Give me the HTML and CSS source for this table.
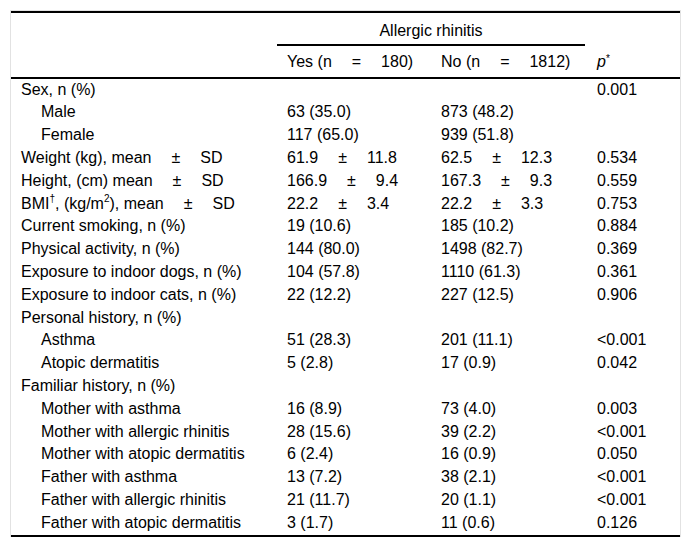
FILE: index.html
```html
<!DOCTYPE html>
<html>
<head>
<meta charset="utf-8">
<link rel="stylesheet" href="styles.css">
</head>
<body>
<div class="frame">
<table class="tbl">
<colgroup>
<col class="col-lbl">
<col class="col-yes">
<col class="col-no">
<col class="col-p">
</colgroup>
<thead>
<tr class="h1">
<th></th>
<th class="grp" colspan="2"><span class="grp-line">Allergic rhinitis</span></th>
<th></th>
</tr>
<tr class="h2">
<th></th>
<th>Yes (n&#8195;&#8197;=&#8195;&#8197;180)</th>
<th>No (n&#8195;&#8197;=&#8195;&#8197;1812)</th>
<th><i>p</i><sup class="ast">*</sup></th>
</tr>
</thead>
<tbody>
<tr><td>Sex, n (%)</td><td></td><td></td><td>0.001</td></tr>
<tr><td class="ind">Male</td><td>63 (35.0)</td><td>873 (48.2)</td><td></td></tr>
<tr><td class="ind">Female</td><td>117 (65.0)</td><td>939 (51.8)</td><td></td></tr>
<tr><td>Weight (kg), mean&#8195;&#8197;±&#8195;&#8197;SD</td><td>61.9&#8195;&#8197;±&#8195;&#8197;11.8</td><td>62.5&#8195;&#8197;±&#8195;&#8197;12.3</td><td>0.534</td></tr>
<tr><td>Height, (cm) mean&#8195;&#8197;±&#8195;&#8197;SD</td><td>166.9&#8195;&#8197;±&#8195;&#8197;9.4</td><td>167.3&#8195;&#8197;±&#8195;&#8197;9.3</td><td>0.559</td></tr>
<tr><td>BMI<sup>†</sup>, (kg/m<sup>2</sup>), mean&#8195;&#8197;±&#8195;&#8197;SD</td><td>22.2&#8195;&#8197;±&#8195;&#8197;3.4</td><td>22.2&#8195;&#8197;±&#8195;&#8197;3.3</td><td>0.753</td></tr>
<tr><td>Current smoking, n (%)</td><td>19 (10.6)</td><td>185 (10.2)</td><td>0.884</td></tr>
<tr><td>Physical activity, n (%)</td><td>144 (80.0)</td><td>1498 (82.7)</td><td>0.369</td></tr>
<tr><td>Exposure to indoor dogs, n (%)</td><td>104 (57.8)</td><td>1110 (61.3)</td><td>0.361</td></tr>
<tr><td>Exposure to indoor cats, n (%)</td><td>22 (12.2)</td><td>227 (12.5)</td><td>0.906</td></tr>
<tr><td>Personal history, n (%)</td><td></td><td></td><td></td></tr>
<tr><td class="ind">Asthma</td><td>51 (28.3)</td><td>201 (11.1)</td><td>&lt;0.001</td></tr>
<tr><td class="ind">Atopic dermatitis</td><td>5 (2.8)</td><td>17 (0.9)</td><td>0.042</td></tr>
<tr><td>Familiar history, n (%)</td><td></td><td></td><td></td></tr>
<tr><td class="ind">Mother with asthma</td><td>16 (8.9)</td><td>73 (4.0)</td><td>0.003</td></tr>
<tr><td class="ind">Mother with allergic rhinitis</td><td>28 (15.6)</td><td>39 (2.2)</td><td>&lt;0.001</td></tr>
<tr><td class="ind">Mother with atopic dermatitis</td><td>6 (2.4)</td><td>16 (0.9)</td><td>0.050</td></tr>
<tr><td class="ind">Father with asthma</td><td>13 (7.2)</td><td>38 (2.1)</td><td>&lt;0.001</td></tr>
<tr><td class="ind">Father with allergic rhinitis</td><td>21 (11.7)</td><td>20 (1.1)</td><td>&lt;0.001</td></tr>
<tr><td class="ind">Father with atopic dermatitis</td><td>3 (1.7)</td><td>11 (0.6)</td><td>0.126</td></tr>
</tbody>
</table>
</div>
</body>
</html>
```

FILE: styles.css
```css
html, body {
  margin: 0;
  padding: 0;
  background: #fff;
}
body {
  padding: 10px 10px 0 10px;
  font-family: "Liberation Sans", Arial, sans-serif;
  font-size: 16px;
  color: #000;
}
.frame {
  width: 669px;
  border: 1px solid #e2e2e2;
  border-bottom: none;
}
.tbl {
  width: 669px;
  border-collapse: collapse;
  table-layout: fixed;
  border-top: 2px solid #000;
  border-bottom: 2px solid #000;
}
.col-lbl { width: 266px; }
.col-yes { width: 154px; }
.col-no { width: 156px; }
.col-p { width: 93px; }
.tbl th, .tbl td {
  text-align: left;
  font-weight: normal;
  padding: 2px 10px;
  line-height: 18.8px;
  white-space: nowrap;
  vertical-align: top;
}
.h1 th {
  padding-top: 9px;
  padding-bottom: 0;
}
.h1 th.grp {
  text-align: center;
  padding: 9px 2px 0 0;
}
.grp-line {
  display: block;
  border-bottom: 2px solid #000;
  padding-bottom: 3px;
}
.h2 th {
  padding-top: 7px;
  padding-bottom: 5px;
  border-bottom: 2px solid #000;
}
.tbl td.ind { padding-left: 30px; }
sup {
  font-size: 10px;
  line-height: 0;
  vertical-align: 7px;
}
.ast {
  font-size: 10px;
  vertical-align: 5px;
}
```
